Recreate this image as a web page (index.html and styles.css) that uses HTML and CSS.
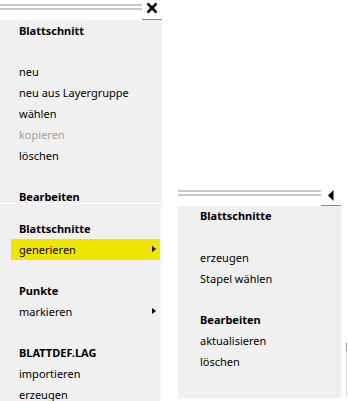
FILE: index.html
```html
<!DOCTYPE html>
<html>
<head>
<meta charset="utf-8">
<link rel="stylesheet" href="styles.css">
</head>
<body>
<div class="stage">
  <div class="panel left">
    <div class="titlebar">
      <div class="grip"><span></span><span></span></div>
      <div class="btn close">
        <svg width="12" height="12" viewBox="0 0 12 12"><path d="M1.5 1.5 L10.5 10.5 M10.5 1.5 L1.5 10.5" stroke="#000" stroke-width="2.6" fill="none"/></svg>
      </div>
    </div>
    <div class="section upper">
      <div class="head">Blattschnitt</div>
      <div class="gap"></div>
      <div class="item">neu</div>
      <div class="item">neu aus Layergruppe</div>
      <div class="item">wählen</div>
      <div class="item disabled">kopieren</div>
      <div class="item">löschen</div>
      <div class="gap"></div>
      <div class="head">Bearbeiten</div>
    </div>
    <div class="section lower">
      <div class="gap small"></div>
      <div class="head">Blattschnitte</div>
      <div class="item sub active">generieren<span class="arrow"></span></div>
      <div class="gap"></div>
      <div class="head">Punkte</div>
      <div class="item sub">markieren<span class="arrow"></span></div>
      <div class="gap"></div>
      <div class="head">BLATTDEF.LAG</div>
      <div class="item">importieren</div>
      <div class="item">erzeugen</div>
    </div>
  </div>
  <div class="panel right">
    <div class="titlebar">
      <div class="grip"><span></span><span></span></div>
      <div class="btn back">
        <svg width="6" height="11" viewBox="0 0 6 11"><path d="M5.5 0 L5.5 11 L0 5.5 Z" fill="#000"/></svg>
      </div>
    </div>
    <div class="section">
      <div class="head">Blattschnitte</div>
      <div class="gap first"></div>
      <div class="item">erzeugen</div>
      <div class="item">Stapel wählen</div>
      <div class="gap"></div>
      <div class="head">Bearbeiten</div>
      <div class="item">aktualisieren</div>
      <div class="item">löschen</div>
    </div>
  </div>
  <div class="edge"></div>
</div>
</body>
</html>
```

FILE: styles.css
```css
html, body {
  margin: 0;
  padding: 0;
  background: #fff;
}
body {
  font-family: "Noto Sans", "Open Sans", sans-serif;
  font-size: 11px;
  color: #000;
  width: 348px;
  height: 401px;
  overflow: hidden;
}
.stage {
  display: flex;
  align-items: flex-start;
}
.panel {
  background: #f0f0f0;
  display: flex;
  flex-direction: column;
}
.left {
  width: 162px;
  height: 401px;
}
.right {
  width: 163px;
  height: 212px;
  margin-top: 186px;
  margin-left: 16px;
}
.edge {
  width: 1px;
  height: 54px;
  margin-top: 343px;
  margin-left: 5px;
  background: linear-gradient(#9a9a9a 0 8px, #dcdcdc 8px);
}
.titlebar {
  display: flex;
  align-items: flex-start;
  height: 20px;
  background: #fff;
}
.grip {
  flex: 1;
  display: flex;
  flex-direction: column;
  gap: 2px;
  padding-top: 4px;
}
.grip span {
  height: 2px;
  background: #c8c8c8;
}
.btn {
  width: 20px;
  height: 19px;
  border-bottom: 1px solid #8a8a8a;
  display: flex;
  align-items: center;
  justify-content: center;
  background: #fff;
}
.close svg {
  margin-top: -3px;
}
.section {
  display: flex;
  flex-direction: column;
  padding-left: 19px;
}
.head {
  font-weight: bold;
  height: 21px;
  line-height: 21px;
}
.item {
  height: 21px;
  line-height: 21px;
  display: flex;
  align-items: center;
}
.disabled {
  color: #a0a0a0;
}
.gap {
  height: 20px;
}
.gap.small {
  height: 14px;
}
.upper {
  height: 187px;
}
.lower {
  border-top: 1px solid #fff;
  border-right: 1px solid #fff;
  margin-right: 1px;
  margin-top: -4px;
}
.sub {
  margin-left: -8px;
  padding-left: 8px;
  position: relative;
}
.active {
  background: #f0e600;
}
.arrow {
  position: absolute;
  right: 4px;
  top: 7px;
  width: 0;
  height: 0;
  border-top: 3.5px solid transparent;
  border-bottom: 3.5px solid transparent;
  border-left: 4px solid #000;
}
.right .section {
  padding-left: 22px;
  margin-top: -1px;
}
.right .gap.first {
  height: 21px;
}
```
